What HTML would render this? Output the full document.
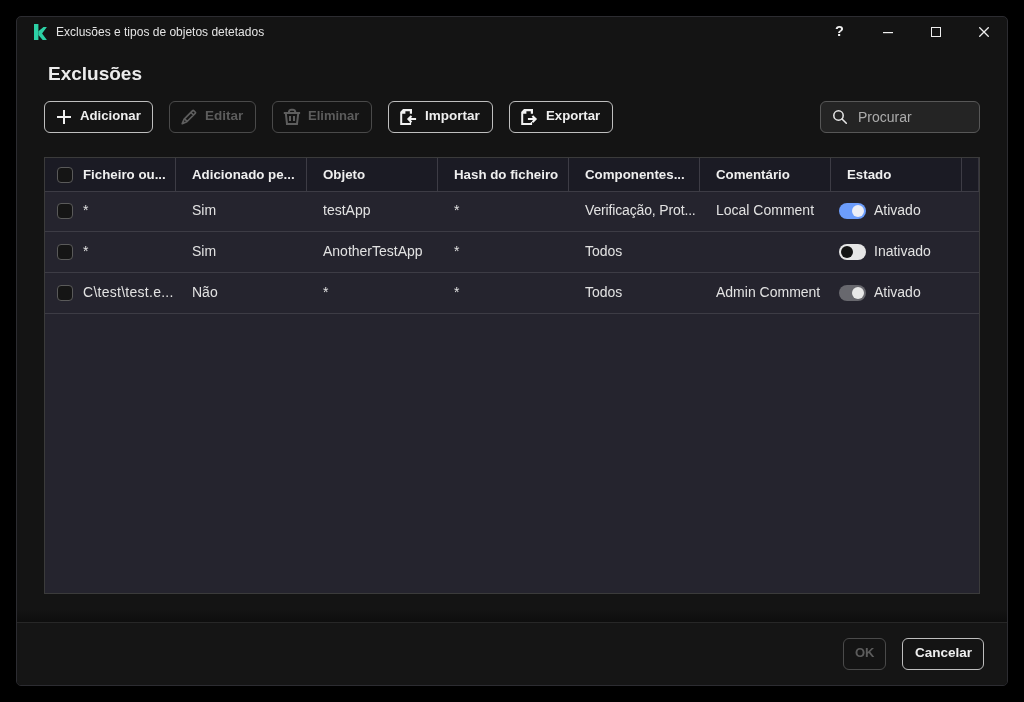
<!DOCTYPE html>
<html><head><meta charset="utf-8">
<style>
*{margin:0;padding:0;box-sizing:border-box}
html,body{-webkit-font-smoothing:antialiased;width:1024px;height:702px;background:#000;overflow:hidden;font-family:"Liberation Sans",sans-serif;color:#e6e6e6}
.abs{position:absolute}
#win{will-change:transform;position:absolute;left:16px;top:16px;width:992px;height:670px;background:#141414;border:1px solid #2c2c31;border-radius:5px;overflow:hidden}
.t{position:absolute;white-space:nowrap;line-height:1}
.btn{position:absolute;height:32px;border:1px solid #bfbfbf;border-radius:6px;background:#141414}
.btn.dis{border-color:#4a4a4a}
.bt{position:absolute;font-size:13.5px;font-weight:700;color:#efefef;white-space:nowrap;line-height:1;top:7px}
.dis .bt{color:#5c5c5c}
#tbl{position:absolute;left:44px;top:157px;width:936px;height:437px;border:1px solid #3b3b3b;background:#25242e}
.hdr{position:absolute;z-index:2;left:0;top:0;width:934px;height:34px;background:#1b1b24;border-bottom:1px solid #3d3c45}
.vd{position:absolute;top:0;width:1px;height:33px;background:#3d3c45}
.ht{position:absolute;top:10px;font-size:13.3px;font-weight:700;color:#efefef;white-space:nowrap;line-height:1}
.row{position:absolute;left:0;width:934px;height:41px;border-bottom:1px solid #3d3c45}
.ct{position:absolute;font-size:14px;color:#e2e2e2;white-space:nowrap;line-height:1;top:12px}
.cb{position:absolute;left:12px;width:16px;height:16px;border:1px solid #5a5a5a;border-radius:4px;background:#151515}
.tg{position:absolute;left:794px;top:11px;width:27px;height:16px;border-radius:8px}
.kn{position:absolute;top:2px;width:12px;height:12px;border-radius:6px}
</style></head><body>
<div id="win">
  <!-- title bar -->
  <svg class="abs" style="left:16px;top:6px" width="16" height="18" viewBox="0 0 16 18">
    <polygon fill="#2cd0a5" points="1,1 5.4,1 5.4,17 1,17"/>
    <polygon fill="#2cd0a5" points="5.4,8.3 10.5,4 13.9,4 9.1,10.6 13.9,17 9.7,17 5.4,12.1"/>
  </svg>
  <div class="t" style="left:39px;top:9px;font-size:12px;color:#e4e4e4">Exclusões e tipos de objetos detetados</div>
  <div class="t" style="left:818px;top:7px;font-size:14.5px;font-weight:700;color:#f0f0f0">?</div>
  <div class="abs" style="left:866px;top:15px;width:10px;height:1px;background:#f0f0f0;box-shadow:0 0.5px 0 rgba(240,240,240,0.4)"></div>
  <div class="abs" style="left:914px;top:10px;width:10.2px;height:10.2px;border:1.3px solid #eee"></div>
  <svg class="abs" style="left:962px;top:10px" width="10" height="10" viewBox="0 0 10 10"><path d="M0.3,0.3 L9.7,9.7 M9.7,0.3 L0.3,9.7" stroke="#eee" stroke-width="1.3"/></svg>

  <div class="t" style="left:31px;top:47px;font-size:19px;font-weight:700;color:#ececec">Exclusões</div>

  <!-- toolbar -->
  <div class="btn" style="left:27px;top:84px;width:109px">
    <svg class="abs" style="left:12px;top:8px" width="14" height="14" viewBox="0 0 14 14"><path d="M7,0 V14 M0,7 H14" stroke="#f0f0f0" stroke-width="2"/></svg>
    <div class="bt" style="left:35px;font-size:13.2px">Adicionar</div>
  </div>
  <div class="btn dis" style="left:152px;top:84px;width:87px">
    <svg class="abs" style="left:6px;top:2px" width="26" height="26" viewBox="0 0 26 26"><g transform="translate(12.2,13.7) rotate(-45)" fill="none" stroke="#5e5e5e" stroke-width="1.7" stroke-linejoin="round"><path d="M-8.4,0 L-3.8,-1.9 H8.2 Q8.9,-1.9 8.9,-1.2 V1.2 Q8.9,1.9 8.2,1.9 H-3.8 Z M-3.4,-1.9 V1.9 M5.7,-1.9 V1.9"/></g></svg>
    <div class="bt" style="left:35px">Editar</div>
  </div>
  <div class="btn dis" style="left:255px;top:84px;width:100px">
    <svg class="abs" style="left:6px;top:2px" width="26" height="26" viewBox="0 0 26 26"><g fill="none" stroke="#5e5e5e" stroke-width="2"><path d="M4.8,9 H21.1 M6.9,10 L8,19.9 H18 L19.2,10 M10,8 V7.5 A2,2 0 0 1 12,5.8 H14.2 A2,2 0 0 1 16.2,7.5 V8"/><path d="M11,12 V17 M15,12 V17"/></g></svg>
    <div class="bt" style="left:35px;font-size:13px">Eliminar</div>
  </div>
  <div class="btn" style="left:371px;top:84px;width:105px">
    <svg class="abs" style="left:6px;top:2px" width="26" height="26" viewBox="0 0 26 26"><path fill="#f2f2f2" d="M5.2,8 L8,5 H17 V9.8 H14.8 V7.2 H10.4 V9.8 H7.2 V18.9 H14.8 V18.1 H16.1 V20.9 H5.2 Z"/><path fill="none" stroke="#f2f2f2" stroke-width="2.1" d="M21.1,15.05 H14.5 M16.5,11.9 L13.4,15.05 L16.5,18.2"/></svg>
    <div class="bt" style="left:36px">Importar</div>
  </div>
  <div class="btn" style="left:492px;top:84px;width:104px">
    <svg class="abs" style="left:6px;top:2px" width="26" height="26" viewBox="0 0 26 26"><path fill="#f2f2f2" d="M5.2,8 L8,5 H17 V9.8 H14.8 V7.2 H10.4 V9.8 H7.2 V18.9 H14.8 V18.1 H16.1 V20.9 H5.2 Z"/><path fill="none" stroke="#f2f2f2" stroke-width="2.1" d="M11.9,15.05 H19 M16.4,11.9 L19.6,15.05 L16.4,18.2"/></svg>
    <div class="bt" style="left:36px;font-size:13.2px">Exportar</div>
  </div>
  <div class="abs" style="left:803px;top:84px;width:160px;height:32px;border:1px solid #575757;border-radius:6px;background:#242424">
    <svg class="abs" style="left:7px;top:2px" width="26" height="26" viewBox="0 0 26 26"><g fill="none" stroke="#e6e6e6" stroke-width="1.55"><circle cx="10.5" cy="11.5" r="4.7"/><path d="M14,15 L18.3,19.3" stroke-linecap="round"/></g></svg>
    <div class="t" style="left:37px;top:8px;font-size:14px;color:#acacac">Procurar</div>
  </div>

  <!-- table -->
  <div id="tbl" style="left:27px;top:140px">
    <div class="hdr">
      <div class="cb" style="top:9px"></div>
      <div class="ht" style="left:38px">Ficheiro ou...</div>
      <div class="vd" style="left:130px"></div>
      <div class="ht" style="left:147px">Adicionado pe...</div>
      <div class="vd" style="left:261px"></div>
      <div class="ht" style="left:278px">Objeto</div>
      <div class="vd" style="left:392px"></div>
      <div class="ht" style="left:409px">Hash do ficheiro</div>
      <div class="vd" style="left:523px"></div>
      <div class="ht" style="left:540px">Componentes...</div>
      <div class="vd" style="left:654px"></div>
      <div class="ht" style="left:671px">Comentário</div>
      <div class="vd" style="left:785px"></div>
      <div class="ht" style="left:802px">Estado</div>
      <div class="vd" style="left:916px"></div>
      <div class="vd" style="left:933px;background:#34333c"></div>
    </div>
    <div class="row" style="top:33px">
      <div class="cb" style="top:12px"></div>
      <div class="ct" style="left:38px">*</div>
      <div class="ct" style="left:147px">Sim</div>
      <div class="ct" style="left:278px">testApp</div>
      <div class="ct" style="left:409px">*</div>
      <div class="ct" style="left:540px;letter-spacing:-0.15px">Verificação, Prot...</div>
      <div class="ct" style="left:671px">Local Comment</div>
      <div class="tg" style="top:12px;background:#6c9dfc"><div class="kn" style="left:13px;background:#eceef6"></div></div>
      <div class="ct" style="left:829px">Ativado</div>
    </div>
    <div class="row" style="top:74px">
      <div class="cb" style="top:12px"></div>
      <div class="ct" style="left:38px">*</div>
      <div class="ct" style="left:147px">Sim</div>
      <div class="ct" style="left:278px">AnotherTestApp</div>
      <div class="ct" style="left:409px">*</div>
      <div class="ct" style="left:540px">Todos</div>
      <div class="tg" style="top:12px;background:#e6e6e6"><div class="kn" style="left:2px;background:#141414"></div></div>
      <div class="ct" style="left:829px">Inativado</div>
    </div>
    <div class="row" style="top:115px">
      <div class="cb" style="top:12px"></div>
      <div class="ct" style="left:38px;letter-spacing:0.27px">C\test\test.e...</div>
      <div class="ct" style="left:147px">Não</div>
      <div class="ct" style="left:278px">*</div>
      <div class="ct" style="left:409px">*</div>
      <div class="ct" style="left:540px">Todos</div>
      <div class="ct" style="left:671px">Admin Comment</div>
      <div class="tg" style="top:12px;background:#68686e"><div class="kn" style="left:13px;background:#e8e8e8"></div></div>
      <div class="ct" style="left:829px">Ativado</div>
    </div>
  </div>

  <!-- footer -->
  <div class="abs" style="left:0;top:593px;width:990px;height:12px;background:linear-gradient(#141414,#0e0e0e)"></div>
  <div class="abs" style="left:0;top:605px;width:990px;height:1px;background:#272727"></div>
  <div class="abs" style="left:0;top:606px;width:990px;height:63px;background:#151515"></div>
  <div class="btn dis" style="left:826px;top:621px;width:43px">
    <div class="bt" style="left:11px;font-size:13px">OK</div>
  </div>
  <div class="btn" style="left:885px;top:621px;width:82px">
    <div class="bt" style="left:12px">Cancelar</div>
  </div>
</div>
</body></html>
